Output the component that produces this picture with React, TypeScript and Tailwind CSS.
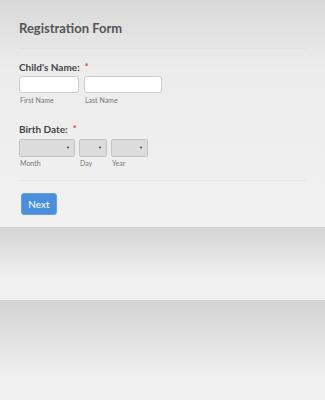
export default function App() {
  return (
    <div className="w-[325px] h-[400px] overflow-hidden bg-[#f0f0f0] font-['Lato','Liberation_Sans',sans-serif] text-[#555]">
      <div className="h-[227px] bg-gradient-to-b from-[#d9d9d9] via-[#ececec] via-30% to-[#f1f1f1] px-[19px] pt-[19px]">
        <h1 className="text-[13px] font-bold leading-[18px] text-[#555]">Registration Form</h1>
        <div className="mt-[11px] h-px bg-[#e0e0e0]" />

        <div className="mt-[11px] flex items-start text-[10px] font-bold leading-[14px] text-[#444]">
          Child's Name:<span className="ml-[5px] text-[#e33] text-[9px]">*</span>
        </div>
        <div className="mt-[2px] flex gap-[5px]">
          <div className="flex flex-col">
            <div className="w-[60px] h-[17px] rounded-[3px] border border-[#ccc] bg-white" />
            <span className="mt-[2px] pl-[1px] text-[7px] leading-[10px] text-[#777]">First Name</span>
          </div>
          <div className="flex flex-col">
            <div className="w-[78px] h-[17px] rounded-[3px] border border-[#ccc] bg-white" />
            <span className="mt-[2px] pl-[1px] text-[7px] leading-[10px] text-[#777]">Last Name</span>
          </div>
        </div>

        <div className="mt-[17px] flex items-start text-[10px] font-bold leading-[14px] text-[#444]">
          Birth Date:<span className="ml-[5px] text-[#e33] text-[9px]">*</span>
        </div>
        <div className="mt-[3px] flex gap-[4px]">
          {[
            { w: "w-[56px]", l: "Month" },
            { w: "w-[28px]", l: "Day" },
            { w: "w-[37px]", l: "Year" },
          ].map((s) => (
            <div key={s.l} className="flex flex-col">
              <div className={`${s.w} h-[18px] rounded-[2px] border border-[#c4c4c4] bg-[#dcdcdc] flex items-center justify-end pr-[4px]`}>
                <span className="text-[4px] text-[#333] leading-none">▼</span>
              </div>
              <span className="mt-[1px] pl-[1px] text-[7px] leading-[10px] text-[#777]">{s.l}</span>
            </div>
          ))}
        </div>
        <div className="mt-[12px] h-px bg-[#e4e4e4]" />

        <button className="mt-[12px] ml-[2px] w-[36px] h-[22px] rounded-[3px] border border-[#6a9fd8] bg-[#4a8fdb] text-white text-[10px] leading-none">
          Next
        </button>
      </div>

      <div className="h-[51px] bg-gradient-to-b from-[#d4d4d4] to-[#f0f0f0]" />
      <div className="h-[22px]" />
      <div className="h-[78px] bg-gradient-to-b from-[#d3d3d3] to-[#f0f0f0]" />
    </div>
  );
}
